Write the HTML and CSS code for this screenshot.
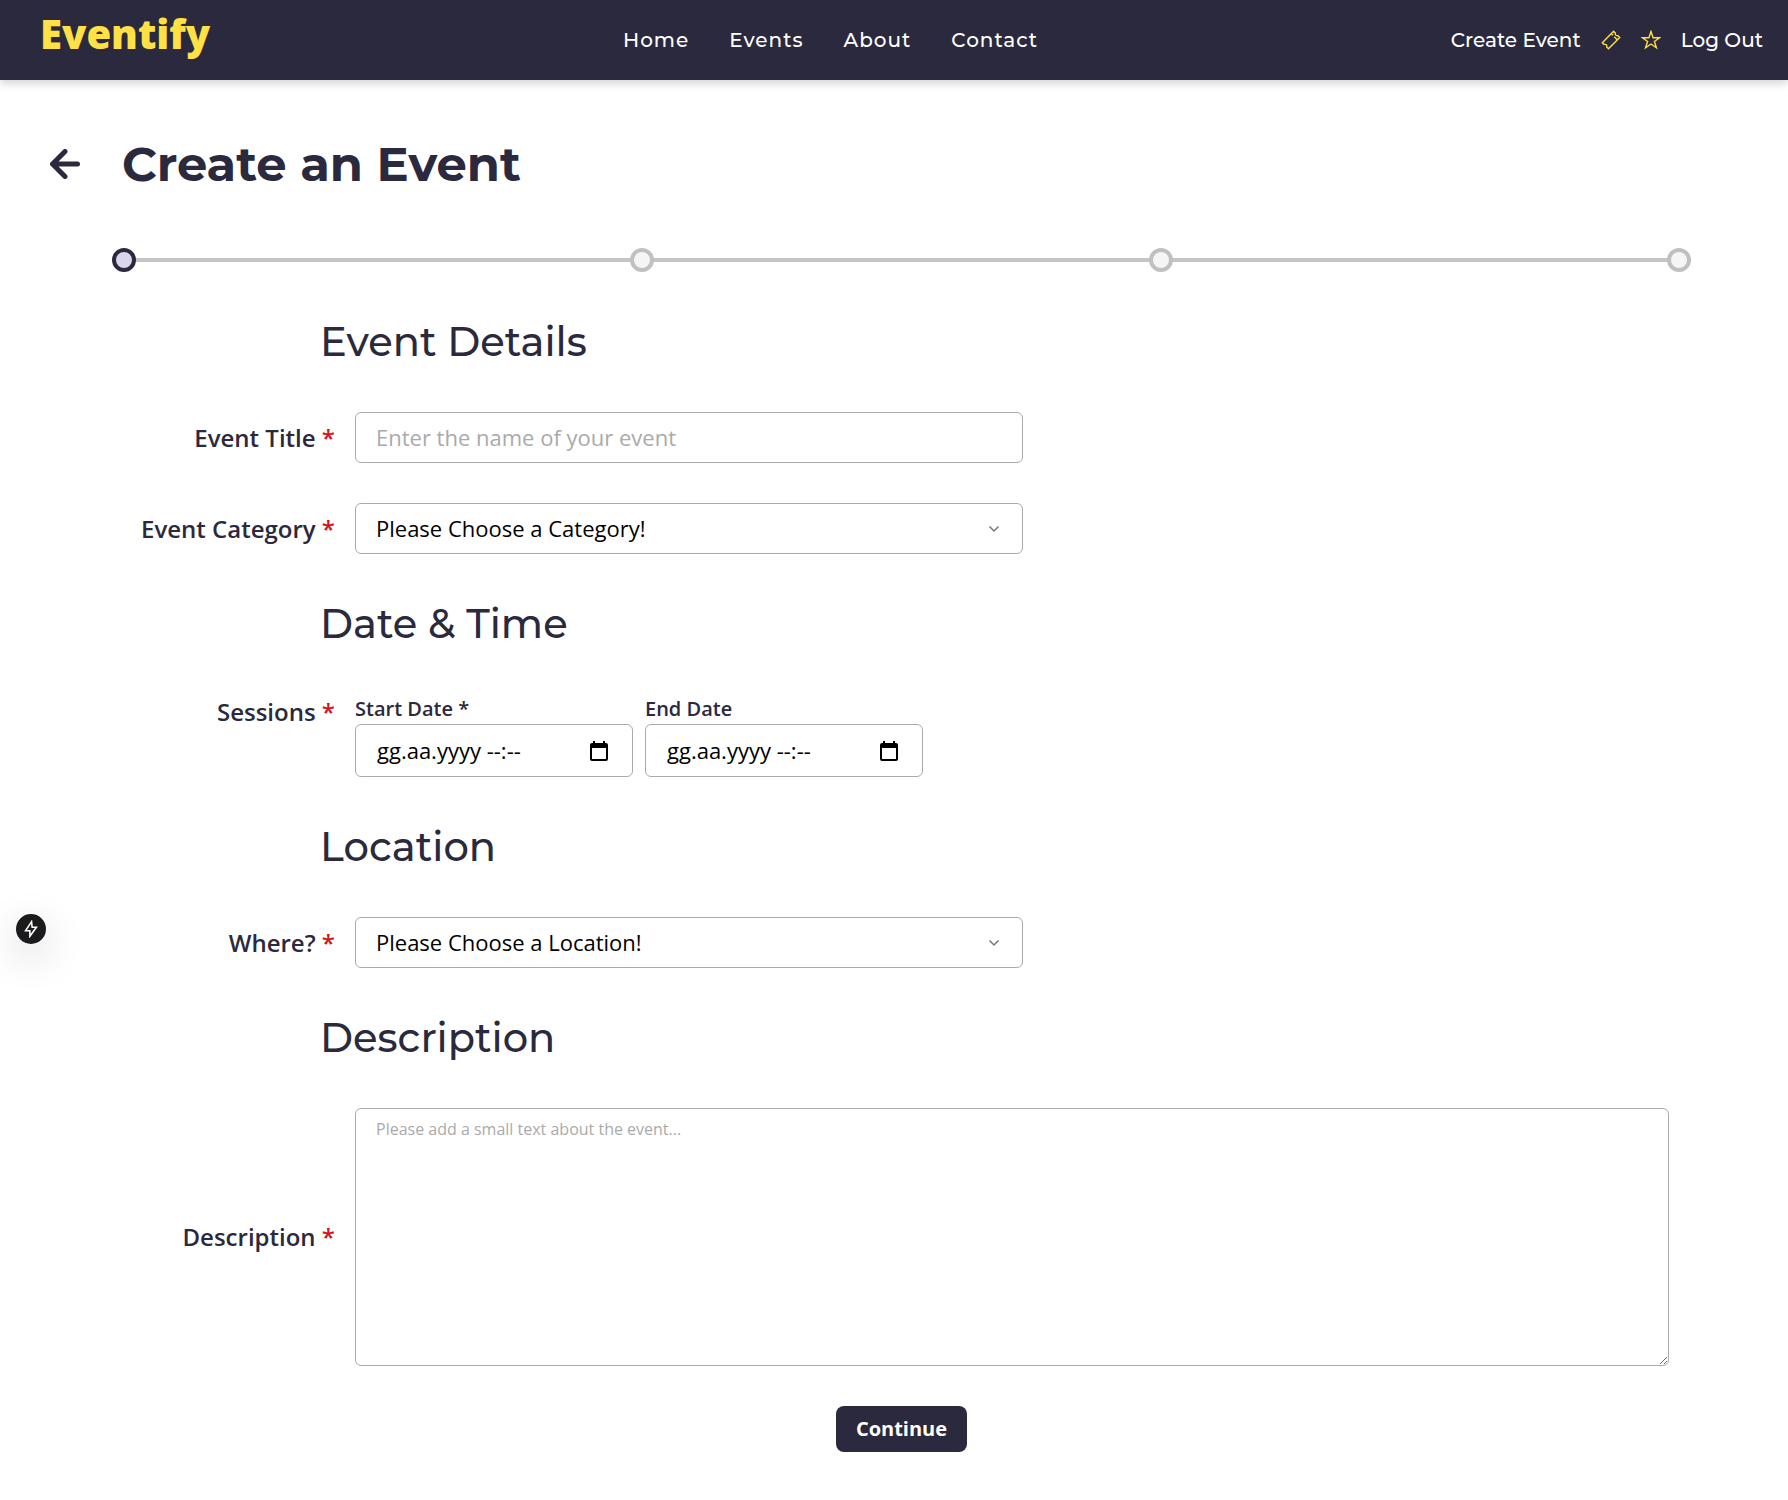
FILE: index.html
```html
<!DOCTYPE html>
<html lang="en">
<head>
<meta charset="utf-8">
<meta name="viewport" content="width=device-width, initial-scale=1">
<title>Create an Event - Eventify</title>
<link rel="stylesheet" href="styles.css">
</head>
<body>
<header class="header">
  <a class="logo" href="#">Eventify</a>
  <nav class="nav" aria-label="Main">
    <a href="#">Home</a>
    <a href="#">Events</a>
    <a href="#">About</a>
    <a href="#">Contact</a>
  </nav>
  <div class="account">
    <a href="#">Create Event</a>
    <a class="icon-link" href="#" aria-label="Tickets">
      <svg viewBox="0 0 20 20" width="20" height="20"><path d="M1.300 12.700 12.600 1.300 14.300 3Q13.900 5.900 16.900 5.700L18.700 7.500 7.500 18.700 5.700 16.900Q6.200 13.900 3.200 14.400ZM10.500 3.700 12 5.200M13.200 6.800 16.200 9.800"/></svg>
    </a>
    <a class="icon-link" href="#" aria-label="Favorites">
      <svg viewBox="0 0 20 20" width="20" height="20"><path d="M10 1.500 12.100 7.700H18.600L13.400 11.500 15.400 17.800 10 14 4.600 17.800 6.600 11.500 1.400 7.700H7.900Z"/></svg>
    </a>
    <a href="#">Log Out</a>
  </div>
</header>

<main class="page">
  <div class="title-row">
    <button class="back" type="button" aria-label="Go back">
      <svg viewBox="0 0 30 30" width="30" height="30"><path d="M15 2.500 2.500 15 15 27.500M2.500 15H27.500"/></svg>
    </button>
    <h1>Create an Event</h1>
  </div>

  <ol class="steps" aria-label="Progress">
    <li class="step current" aria-current="step"></li>
    <li class="step"></li>
    <li class="step"></li>
    <li class="step"></li>
  </ol>

  <form class="form">
    <h2>Event Details</h2>
    <div class="row">
      <label class="label" for="title">Event Title <span class="required">*</span></label>
      <input class="control" id="title" type="text" placeholder="Enter the name of your event">
    </div>
    <div class="row">
      <label class="label" for="category">Event Category <span class="required">*</span></label>
      <div class="select">
        <select class="control" id="category"><option>Please Choose a Category!</option></select>
        <svg class="chevron" viewBox="0 0 12 8" width="12" height="8"><path d="M1.500 1.500 6 6 10.500 1.500"/></svg>
      </div>
    </div>

    <h2>Date &amp; Time</h2>
    <div class="row sessions" role="group" aria-labelledby="sessions">
      <span class="label" id="sessions">Sessions <span class="required">*</span></span>
      <div class="dates">
        <div class="date">
          <label for="start">Start Date *</label>
          <div class="control date-box">
            <input id="start" type="text" placeholder="gg.aa.yyyy --:--">
            <button type="button" aria-label="Open calendar for start date"><svg viewBox="0 0 20 20" width="20" height="20"><path d="M17 2H16V0H14V2H6V0H4V2H3Q1 2 1 4V18Q1 20 3 20H17Q19 20 19 18V4Q19 2 17 2ZM17 18H3V7H17Z"/></svg></button>
          </div>
        </div>
        <div class="date">
          <label for="end">End Date</label>
          <div class="control date-box">
            <input id="end" type="text" placeholder="gg.aa.yyyy --:--">
            <button type="button" aria-label="Open calendar for end date"><svg viewBox="0 0 20 20" width="20" height="20"><path d="M17 2H16V0H14V2H6V0H4V2H3Q1 2 1 4V18Q1 20 3 20H17Q19 20 19 18V4Q19 2 17 2ZM17 18H3V7H17Z"/></svg></button>
          </div>
        </div>
      </div>
    </div>

    <h2>Location</h2>
    <div class="row">
      <label class="label" for="where">Where? <span class="required">*</span></label>
      <div class="select">
        <select class="control" id="where"><option>Please Choose a Location!</option></select>
        <svg class="chevron" viewBox="0 0 12 8" width="12" height="8"><path d="M1.500 1.500 6 6 10.500 1.500"/></svg>
      </div>
    </div>

    <h2>Description</h2>
    <div class="row">
      <label class="label" for="description">Description <span class="required">*</span></label>
      <textarea class="control" id="description" placeholder="Please add a small text about the event..."></textarea>
    </div>
    <button class="continue" type="submit">Continue</button>
  </form>
</main>

<button class="dev-badge" type="button" aria-label="Static route">
  <svg viewBox="0 0 16 16" width="18" height="18"><path d="M8.500 1.500 3.200 9.500H7V14.500L12.800 6.500H9Z"/></svg>
</button>
</body>
</html>
```
FILE: styles.css
```css
* {
  box-sizing: border-box;
}

:root {
  --ink: #2b293d;
  --yellow: #ffe047;
  --line: #aaa;
  --heading-font: Montserrat, Inter, sans-serif;
  --body-font: "Open Sans", sans-serif;
}

body {
  margin: 0;
  background: #fff;
  color: var(--ink);
  font-family: var(--body-font);
}

button,
input,
select,
textarea {
  font-family: inherit;
}

.header {
  display: flex;
  align-items: center;
  justify-content: space-between;
  height: 80px;
  padding: 0 25px 0 40px;
  background: var(--ink);
  box-shadow: 0 4px 8px rgba(0, 0, 0, 0.16);
  font-family: var(--heading-font);
  font-size: 20px;
  font-weight: 500;
}

.header a {
  color: #fff;
  text-decoration: none;
}

.header .logo {
  padding-bottom: 12px;
  color: var(--yellow);
  font-family: "Noto Sans", sans-serif;
  font-size: 40px;
  font-weight: 900;
  line-height: 48px;
}

.nav {
  display: flex;
  gap: 40px;
  letter-spacing: 1px;
}

.account {
  display: flex;
  align-items: center;
  gap: 20px;
}

.icon-link {
  display: flex;
}

.icon-link svg {
  fill: none;
  stroke: var(--yellow);
  stroke-width: 1.4;
}

.page {
  padding: 48px 97px 48px 112px;
}

.title-row {
  display: flex;
  align-items: center;
  gap: 42px;
  margin-left: -62px;
}

.back {
  display: flex;
  padding: 0;
  border: 0;
  background: none;
}

.back svg {
  fill: none;
  stroke: var(--ink);
  stroke-width: 5;
  stroke-linecap: round;
  stroke-linejoin: round;
}

h1 {
  margin: 0;
  font-family: var(--heading-font);
  font-size: 48px;
  font-weight: 700;
  line-height: 72px;
}

.steps {
  display: flex;
  align-items: center;
  justify-content: space-between;
  height: 24px;
  margin: 48px 0 0;
  padding: 0;
  background: linear-gradient(#c4c4c4, #c4c4c4) center / 100% 4px no-repeat;
  list-style: none;
}

.step {
  width: 24px;
  height: 24px;
  border: 4px solid #c0c0c0;
  border-radius: 50%;
  background: #f5f5f5;
}

.step.current {
  border-color: var(--ink);
  background: #d9d6ec;
}

.form {
  display: flex;
  flex-direction: column;
  gap: 40px;
  padding-top: 40px;
}

h2 {
  margin: 0 0 0 208px;
  font-family: var(--heading-font);
  font-size: 40px;
  font-weight: 500;
  line-height: 60px;
}

.row {
  display: grid;
  grid-template-columns: 223px 1fr;
  column-gap: 20px;
  align-items: center;
  padding-right: 22px;
}

.label {
  font-size: 24px;
  font-weight: 600;
  line-height: 32px;
  text-align: right;
}

.required {
  color: #d6111e;
}

.control {
  width: 100%;
  max-width: 668px;
  height: 51px;
  padding: 0 20px 2px;
  border: 1px solid var(--line);
  border-radius: 6px;
  background: #fff;
  color: #000;
  font-size: 22px;
}

.control::placeholder {
  color: #aaa;
  opacity: 1;
}

.select {
  position: relative;
  max-width: 668px;
}

select.control {
  display: block;
  appearance: none;
}

.chevron {
  position: absolute;
  top: 22px;
  right: 23px;
  fill: none;
  stroke: #777;
  stroke-width: 1.5;
  pointer-events: none;
}

.sessions {
  align-items: start;
}

.sessions .label {
  padding-top: 2px;
}

.dates {
  display: flex;
  gap: 12px;
}

.date {
  width: 278px;
}

.date label {
  display: block;
  font-size: 20px;
  font-weight: 600;
  line-height: 30px;
}

.date-box {
  display: flex;
  align-items: center;
  height: 53px;
  padding: 0 23px 0 21px;
}

.date-box input {
  flex: 1;
  min-width: 0;
  padding: 0 0 2px;
  border: 0;
  background: none;
  font-size: 22px;
}

.date-box input::placeholder {
  color: #000;
  opacity: 1;
}

.date-box button {
  display: flex;
  padding: 0;
  border: 0;
  background: none;
}

textarea.control {
  display: block;
  max-width: none;
  height: 258px;
  padding: 8px 20px;
  font-size: 16px;
  line-height: 24px;
}

.continue {
  align-self: center;
  height: 46px;
  padding: 0 20px 2px;
  border: 0;
  border-radius: 8px;
  background: var(--ink);
  color: #fff;
  font-size: 20px;
  font-weight: 700;
}

.dev-badge {
  position: fixed;
  top: 914px;
  left: 16px;
  display: flex;
  align-items: center;
  justify-content: center;
  width: 30px;
  height: 30px;
  padding: 0;
  border: 0;
  border-radius: 50%;
  background: #1b1b1d;
  box-shadow: 0 12px 40px rgba(0, 0, 0, 0.2);
}

.dev-badge svg {
  fill: none;
  stroke: #fff;
  stroke-width: 1.4;
}
```
